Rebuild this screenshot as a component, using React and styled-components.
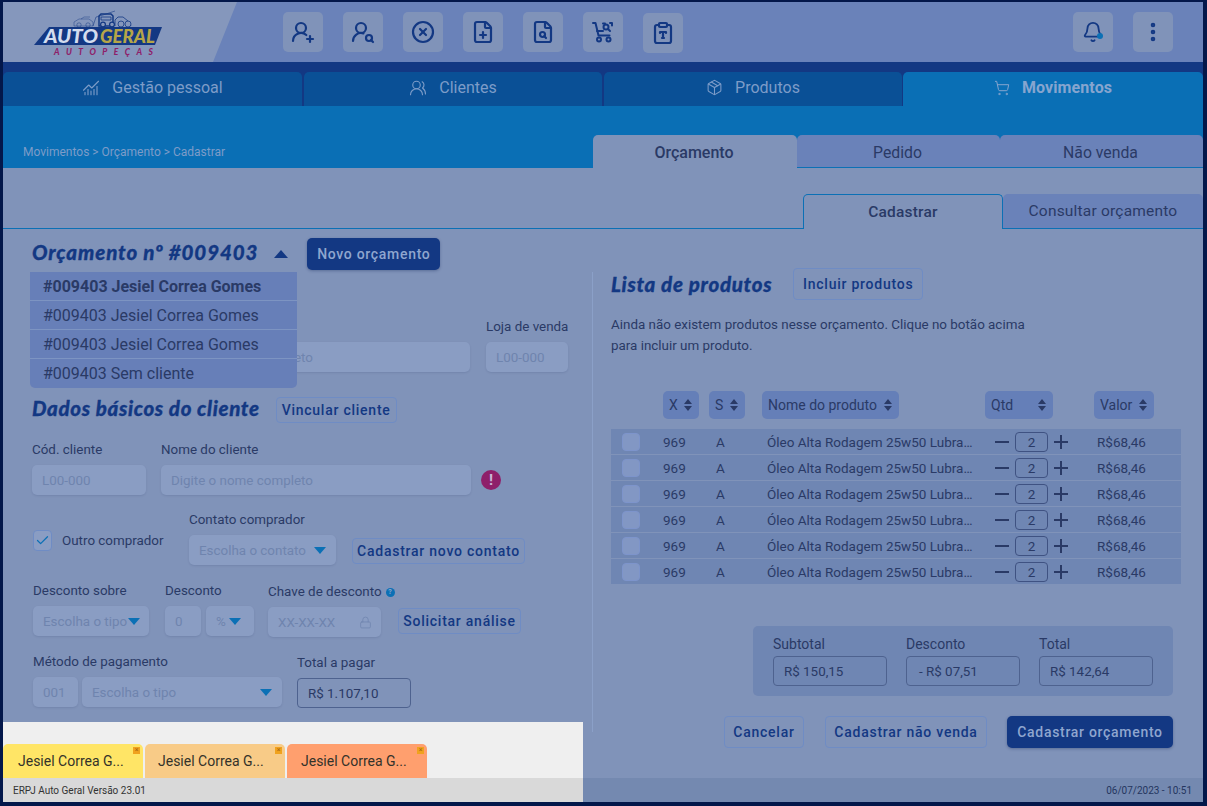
import React from 'react';
import styled, { createGlobalStyle } from 'styled-components';
import {
  UserRoundPlus,
  UserRoundSearch,
  CircleX,
  FilePlus,
  FileSearch,
  ClipboardType,
  Bell,
  EllipsisVertical,
  ChartNoAxesCombined,
  UsersRound,
  Package,
  ShoppingCart,
  Check,
  Lock,
} from 'lucide-react';

const GlobalStyle = createGlobalStyle`
  * { box-sizing: border-box; }
  html, body { margin: 0; padding: 0; height: 806px; overflow: hidden; }
  body { background: #03174a; font-family: Roboto, "Liberation Sans", sans-serif; }
`;

const navy = '#133883';
const ink = '#2a3a66';
const pageBg = '#8093b9';
const fieldBg = '#8a9dc3';
const hint = '#6f84ae';
const lineBlue = '#0b70b5';

const Frame = styled.div`
  position: relative;
  width: 1200px;
  height: 800px;
  margin: 2px 0 0 3px;
  background: ${pageBg};
  display: flex;
  flex-direction: column;
  overflow: hidden;
`;

const Header = styled.header`
  height: 60px;
  flex-shrink: 0;
  background: #6a82b9;
  display: flex;
  align-items: center;
  padding-right: 30px;
`;

const LogoArea = styled.div`
  width: 234px;
  height: 60px;
  background: #8597bc;
  clip-path: polygon(0 0, 100% 0, 210px 100%, 0 100%);
  padding-left: 28px;
  flex-shrink: 0;
`;

const IconGroup = styled.div`
  display: flex;
  gap: 20px;
  margin-left: 46px;
`;

const RightGroup = styled(IconGroup)`
  margin-left: auto;
`;

const IconButton = styled.button`
  width: 40px;
  height: 40px;
  border: 0;
  padding: 0;
  border-radius: 5px;
  background: #8093b9;
  color: ${navy};
  display: flex;
  align-items: center;
  justify-content: center;
  position: relative;
  top: ${(p) => (p.$drop ? '1px' : '0')};
`;

const BellDot = styled.span`
  position: absolute;
  width: 6px;
  height: 6px;
  border-radius: 50%;
  background: #0b70b5;
  right: 10px;
  top: 21px;
`;

const Stripe = styled.div`
  height: 10px;
  flex-shrink: 0;
  background: ${navy};
`;

const NavBar = styled.nav`
  height: 34px;
  flex-shrink: 0;
  display: flex;
  gap: 2px;
  background: ${navy};
`;

const NavTab = styled.div`
  width: ${(p) => p.$w}px;
  margin-left: ${(p) => (p.$active ? '-1px' : '0')};
  border-radius: 5px 5px 0 0;
  background: ${(p) => (p.$active ? '#0a6fb5' : '#0a5096')};
  color: ${(p) => (p.$active ? '#86a5cf' : '#7d9cc8')};
  font-size: 16px;
  font-weight: ${(p) => (p.$active ? 700 : 400)};
  letter-spacing: ${(p) => (p.$active ? 0.1 : 0)}px;
  display: flex;
  align-items: center;
  justify-content: center;
  gap: 12px;
  padding-bottom: 3px;
`;

const SubBand = styled.div`
  height: 62px;
  flex-shrink: 0;
  background: #0a6fb5;
  display: flex;
  justify-content: space-between;
  align-items: flex-end;
`;

const Breadcrumb = styled.div`
  color: #7d9cc8;
  font-size: 12px;
  margin: 0 0 9px 20px;
`;

const SubTabs = styled.div`
  display: flex;
  width: 610px;
  height: 33px;
`;

const SubTab = styled.div`
  flex: ${(p) => (p.$active ? '0 0 204px' : '1')};
  border-radius: 5px 5px 0 0;
  background: ${(p) => (p.$active ? pageBg : '#6a82b9')};
  border-bottom: ${(p) => (p.$active ? '0' : `1px solid ${lineBlue}`)};
  color: ${ink};
  font-size: ${(p) => (p.$active ? 16 : 15.8)}px;
  font-weight: ${(p) => (p.$active ? 500 : 400)};
  display: flex;
  align-items: center;
  justify-content: center;
  padding: 2px 2px 0 0;
`;

const Content = styled.main`
  flex: 1;
  display: flex;
  flex-direction: column;
  min-height: 0;
`;

const FormTabs = styled.div`
  margin-top: 26px;
  height: 35px;
  flex-shrink: 0;
  display: flex;
  justify-content: flex-end;
  border-bottom: 1px solid ${lineBlue};
`;

const FormTab = styled.div`
  width: 200px;
  height: ${(p) => (p.$active ? '35px' : '34px')};
  border-radius: 5px 5px 0 0;
  background: ${(p) => (p.$active ? pageBg : '#6a82b9')};
  border: ${(p) => (p.$active ? `1px solid ${lineBlue}` : '0')};
  border-bottom: 0;
  color: ${ink};
  font-size: 15.5px;
  font-weight: ${(p) => (p.$active ? 500 : 400)};
  letter-spacing: 0.2px;
  display: flex;
  align-items: center;
  justify-content: center;
`;

const Columns = styled.div`
  flex: 1;
  display: flex;
  min-height: 0;
`;

const LeftColumn = styled.section`
  position: relative;
  width: 589px;
  flex-shrink: 0;
  padding: 9px 0 0 29px;
`;

const RightColumn = styled.section`
  flex: 1;
  padding: 39px 0 0 18px;
`;

const Divider = styled.div`
  width: 1px;
  height: 460px;
  margin-top: 43px;
  background: #8ba0c8;
  flex-shrink: 0;
`;

const TitleRow = styled.div`
  display: flex;
  align-items: center;
  height: ${(p) => p.$h || 32}px;
  margin-top: ${(p) => p.$top || 0}px;
`;

const Title = styled.h2`
  margin: 0 0 ${(p) => p.$lift || 0}px;
  color: ${navy};
  font-family: Lato, Roboto, sans-serif;
  font-size: 20.5px;
  font-style: italic;
  font-weight: 900;
  letter-spacing: ${(p) => p.$spacing || 0.65}px;
  white-space: nowrap;
  -webkit-text-stroke: 0.3px ${navy};
`;

const Caret = styled.span`
  width: 0;
  height: 0;
  border-left: 7px solid transparent;
  border-right: 7px solid transparent;
  border-bottom: 8px solid ${navy};
  margin: 0 19px 0 16px;
`;

const PrimaryButton = styled.button`
  height: 32px;
  width: ${(p) => p.$w}px;
  margin-left: ${(p) => p.$left || 0}px;
  padding: 0;
  border: 0;
  border-radius: 5px;
  background: ${navy};
  color: #8fa6cf;
  font: 500 14px Roboto, sans-serif;
  letter-spacing: 0.7px;
  box-shadow: 0 1px 3px rgba(20, 40, 90, 0.35);
`;

const OutlineButton = styled.button`
  height: ${(p) => p.$h || 26}px;
  width: ${(p) => p.$w}px;
  margin-left: ${(p) => p.$left || 0}px;
  margin-bottom: ${(p) => p.$bottom || 0}px;
  padding: 0;
  border: 1px solid #6f8cc4;
  border-radius: 4px;
  background: transparent;
  color: ${navy};
  font: 500 14px Roboto, sans-serif;
  letter-spacing: 0.75px;
  flex-shrink: 0;
`;

const Dropdown = styled.ul`
  position: absolute;
  z-index: 2;
  left: 27px;
  top: 43px;
  width: 267px;
  margin: 0;
  padding: 0;
  list-style: none;
  background: #677fb8;
  border-radius: 0 0 5px 5px;
`;

const DropItem = styled.li`
  height: 29px;
  padding-left: 13px;
  display: flex;
  align-items: center;
  color: ${ink};
  font-size: 16px;
  font-weight: ${(p) => (p.$bold ? 700 : 400)};
  border-bottom: 1px solid #7d94c2;
  &:last-child { border-bottom: 0; }
`;

const FormRow = styled.div`
  display: flex;
  align-items: flex-end;
  margin-top: ${(p) => p.$top || 0}px;
  margin-left: ${(p) => p.$left || 0}px;
`;

const Field = styled.div`
  display: flex;
  flex-direction: column;
  flex-shrink: 0;
  width: ${(p) => p.$w}px;
  margin-left: ${(p) => p.$left || 0}px;
  margin-bottom: ${(p) => p.$bottom || 0}px;
`;

const Label = styled.label`
  height: 16px;
  padding-top: 2px;
  line-height: 16px;
  margin-bottom: 8px;
  color: ${ink};
  font-size: 13.4px;
  white-space: nowrap;
  display: flex;
  align-items: center;
  gap: 4px;
`;

const InputBox = styled.div`
  height: 30px;
  border-radius: 5px;
  background: ${fieldBg};
  color: ${hint};
  font-size: 13.4px;
  padding: 0 ${(p) => p.$right ?? 10}px 0 10px;
  display: flex;
  align-items: center;
  justify-content: space-between;
  white-space: nowrap;
  box-shadow: 0 1px 2px rgba(40, 60, 110, 0.15);
`;

const ReadOnlyBox = styled.div`
  width: 114px;
  height: 30px;
  flex-shrink: 0;
  border: 1px solid #4e628f;
  border-radius: 4px;
  color: ${ink};
  font-size: 13.4px;
  padding-left: ${(p) => p.$pad || 10}px;
  display: flex;
  align-items: center;
`;

const SelectArrow = styled.span`
  width: 0;
  height: 0;
  flex-shrink: 0;
  border-left: 6px solid transparent;
  border-right: 6px solid transparent;
  border-top: 7px solid #0b70b5;
`;

const AlertDot = styled.span`
  width: 20px;
  height: 20px;
  margin: 0 0 5px 10px;
  border-radius: 50%;
  background: #8e1f6a;
  color: #c9b6d6;
  font-size: 15px;
  font-weight: 700;
  display: flex;
  align-items: center;
  justify-content: center;
`;

const InfoDot = styled.span`
  width: 9px;
  height: 9px;
  flex-shrink: 0;
  border-radius: 50%;
  background: #0b70b5;
  color: #8fa6cf;
  font-size: 7px;
  font-weight: 700;
  line-height: 9px;
  text-align: center;
`;

const CheckLabel = styled.div`
  display: flex;
  align-items: center;
  gap: 10px;
  margin-bottom: 14px;
  width: 156px;
  color: ${ink};
  font-size: 13.4px;
  flex-shrink: 0;
  white-space: nowrap;
`;

const CheckBox = styled.span`
  width: 19px;
  height: 21px;
  border: 1px solid #6f8cc4;
  border-radius: 4px;
  background: ${fieldBg};
  color: #0b70b5;
  display: flex;
  align-items: center;
  justify-content: center;
  flex-shrink: 0;
`;

const Paragraph = styled.p`
  margin: 14px 0 0;
  width: 430px;
  color: ${ink};
  font-size: 13.4px;
  line-height: 21px;
`;

const tableColumns = '52px 46px 53px 223px 109px 87px';

const TableHead = styled.div`
  display: grid;
  grid-template-columns: ${tableColumns};
  margin-top: 35px;
  height: 28px;
  width: 570px;
`;

const HeadCell = styled.div`
  grid-column: ${(p) => p.$col};
  width: ${(p) => p.$w}px;
  height: 28px;
  border-radius: 5px;
  background: #657fb8;
  color: ${ink};
  font-size: 14px;
  padding: 0 6px;
  display: flex;
  align-items: center;
  justify-content: space-between;
`;

const TableBody = styled.div`
  margin-top: 10px;
  width: 570px;
`;

const TableRow = styled.div`
  display: grid;
  grid-template-columns: ${tableColumns};
  align-items: center;
  height: 26px;
  background: #6f86b3;
  border-bottom: 1px solid #8093b9;
  color: ${ink};
  font-size: 13.5px;
  &:last-child { border-bottom: 0; height: 25px; }
`;

const RowCheck = styled.span`
  width: 18px;
  height: 18px;
  margin-left: 11px;
  border-radius: 4px;
  background: #8297c4;
  border: 1px solid #7d94cb;
`;

const Cell = styled.span`
  padding-left: ${(p) => p.$pad || 0}px;
  white-space: nowrap;
`;

const NameCell = styled.span`
  margin-left: 5px;
  width: 206px;
  overflow: hidden;
  text-overflow: ellipsis;
  white-space: nowrap;
`;

const Stepper = styled.div`
  display: flex;
  align-items: center;
  padding-left: 9px;
  gap: 5px;
  color: ${ink};
`;

const QtyBox = styled.span`
  width: 33px;
  height: 20px;
  margin-right: 1px;
  border: 1px solid #3f5282;
  border-radius: 4px;
  text-align: center;
  line-height: 18px;
`;

const Summary = styled.div`
  display: flex;
  gap: 19px;
  width: 420px;
  height: 70px;
  margin: 42px 0 0 142px;
  padding: 10px 20px 0;
  border-radius: 5px;
  background: #6f86b3;
`;

const SummaryField = styled.div`
  display: flex;
  flex-direction: column;
  gap: 5px;
`;

const SummaryLabel = styled.span`
  height: 15px;
  line-height: 17px;
  color: ${ink};
  font-size: 14px;
`;

const Actions = styled.div`
  display: flex;
  gap: 21px;
  margin: 20px 0 0 113px;
`;

const StatusBar = styled.footer`
  height: 24px;
  flex-shrink: 0;
  background: #7489b0;
  color: #24365f;
  font-size: 10px;
  display: flex;
  align-items: center;
  justify-content: flex-end;
  padding-right: 11px;
`;

const Dock = styled.div`
  position: absolute;
  z-index: 3;
  left: 0;
  bottom: 0;
  width: 580px;
  height: 80px;
  background: #efefef;
  display: flex;
  flex-direction: column;
  justify-content: flex-end;
`;

const DockTabs = styled.div`
  display: flex;
  gap: 2px;
`;

const DockTab = styled.div`
  position: relative;
  width: 140px;
  height: 34px;
  border-radius: 5px 5px 0 0;
  background: ${(p) => p.$color};
  color: #33322a;
  font-size: 14px;
  padding-left: ${(p) => p.$pad}px;
  display: flex;
  align-items: center;
`;

const DockClose = styled.span`
  position: absolute;
  top: 3px;
  right: 3px;
  width: 7px;
  height: 7px;
  background: #f0a21e;
  color: #a8650e;
  font-size: 7px;
  line-height: 7px;
  text-align: center;
`;

const DockStatus = styled.div`
  height: 24px;
  padding-left: 10px;
  background: #d9d9d9;
  color: #333;
  font-size: 10px;
  display: flex;
  align-items: center;
`;

const Logo = () => (
  <svg width="140" height="50" viewBox="0 0 140 50" style={{ display: 'block', marginTop: 6 }}>
    <g fill="none" stroke={navy} strokeWidth="0.8">
      <path d="M43 18 v-4 l5-3 h10 l4 3 v4 z" opacity="0.55" />
      <path d="M50 11 l3-2 h6" opacity="0.55" />
      <path d="M62 18 L65 9 l4-1 L84 3" opacity="0.7" />
      <path d="M68 18 v-10 l2-2 h10 l2 2 v10 z" strokeWidth="1.5" />
      <path d="M70 9 h10 v3 h-10 z" />
      <path d="M84 18 v-6 l3-3 h5 l5 4 l3 5" />
      <circle cx="72" cy="16.5" r="2.4" fill="#8597bc" strokeWidth="1.2" />
      <circle cx="81" cy="16.5" r="2.4" fill="#8597bc" strokeWidth="1.2" />
      <circle cx="90" cy="16" r="3" fill="#8597bc" />
      <circle cx="97" cy="16" r="3" fill="#8597bc" />
      <circle cx="48" cy="17" r="2.2" opacity="0.6" />
      <circle cx="57" cy="17" r="2.2" opacity="0.6" />
    </g>
    <polygon points="3,37 18,19 131,19 124,37" fill={navy} />
    <text x="13" y="34.5" textLength="54" lengthAdjust="spacingAndGlyphs" fill="#d3dcee" fontFamily="Lato, sans-serif" fontStyle="italic" fontWeight="900" fontSize="18">AUTO</text>
    <text x="69" y="34.5" textLength="55" lengthAdjust="spacingAndGlyphs" fill="#b5a548" fontFamily="Lato, sans-serif" fontStyle="italic" fontWeight="900" fontSize="18">GERAL</text>
    <text x="23" y="46.5" textLength="99" fill="#8e1f6a" fontFamily="Lato, sans-serif" fontStyle="italic" fontWeight="900" fontSize="8.5">AUTOPEÇAS</text>
  </svg>
);

const CartSearch = () => (
  <svg width="24" height="24" viewBox="0 0 24 24" fill="none" stroke="currentColor" strokeWidth="2" strokeLinecap="round" strokeLinejoin="round">
    <path d="M2 3h2.5l3 12.5h11" />
    <path d="M6 11h6" />
    <circle cx="8" cy="19.5" r="2" />
    <circle cx="17.5" cy="19.5" r="2" />
    <circle cx="15" cy="7" r="2.5" />
    <path d="M17 9l2 2" />
    <path d="M12 3.5h2M19 3h2v2.5" />
  </svg>
);

const SortIcon = () => (
  <svg width="10" height="14" viewBox="0 0 10 14" fill={ink}>
    <path d="M5 1l4 5H1zM5 13L1 8h8z" />
  </svg>
);

const MinusIcon = () => (
  <svg width="16" height="16" viewBox="0 0 16 16" stroke="currentColor" strokeWidth="2">
    <path d="M1 8h14" />
  </svg>
);

const PlusIcon = () => (
  <svg width="14" height="14" viewBox="0 0 14 14" stroke="currentColor" strokeWidth="2">
    <path d="M0 7h14M7 0v14" />
  </svg>
);

const topIcons = [
  <UserRoundPlus key="a" size={24} strokeWidth={2.2} />,
  <UserRoundSearch key="b" size={24} strokeWidth={2.2} />,
  <CircleX key="c" size={24} strokeWidth={2.2} />,
  <FilePlus key="d" size={24} strokeWidth={2.2} />,
  <FileSearch key="e" size={24} strokeWidth={2.2} />,
  <CartSearch key="f" />,
];

const orders = ['#009403 Jesiel Correa Gomes', '#009403 Jesiel Correa Gomes', '#009403 Jesiel Correa Gomes', '#009403 Sem cliente'];
const dockTabs = [
  { color: '#ffe566', pad: 15 },
  { color: '#f8cb87', pad: 13 },
  { color: '#ff9f6e', pad: 14 },
];

const ProductRow = () => (
  <TableRow>
    <RowCheck />
    <Cell>969</Cell>
    <Cell $pad={7}>A</Cell>
    <NameCell>Óleo Alta Rodagem 25w50 Lubrax Essencial</NameCell>
    <Stepper>
      <MinusIcon />
      <QtyBox>2</QtyBox>
      <PlusIcon />
    </Stepper>
    <Cell $pad={3}>R$68,46</Cell>
  </TableRow>
);

export default function App() {
  return (
    <>
      <GlobalStyle />
      <Frame>
        <Header>
          <LogoArea>
            <Logo />
          </LogoArea>
          <IconGroup>
            {topIcons.map((icon) => (
              <IconButton key={icon.key}>{icon}</IconButton>
            ))}
            <IconButton $drop>
              <ClipboardType size={24} strokeWidth={2.2} />
            </IconButton>
          </IconGroup>
          <RightGroup>
            <IconButton>
              <Bell size={22} />
              <BellDot />
            </IconButton>
            <IconButton>
              <EllipsisVertical size={24} strokeWidth={2.6} />
            </IconButton>
          </RightGroup>
        </Header>
        <Stripe />
        <NavBar>
          <NavTab $w={299}>
            <ChartNoAxesCombined size={18} strokeWidth={1.5} />
            Gestão pessoal
          </NavTab>
          <NavTab $w={298}>
            <UsersRound size={18} strokeWidth={1.5} />
            Clientes
          </NavTab>
          <NavTab $w={298}>
            <Package size={17} strokeWidth={1.5} />
            Produtos
          </NavTab>
          <NavTab $w={300} $active>
            <ShoppingCart size={16} strokeWidth={1.5} />
            Movimentos
          </NavTab>
        </NavBar>
        <SubBand>
          <Breadcrumb>Movimentos &gt; Orçamento &gt; Cadastrar</Breadcrumb>
          <SubTabs>
            <SubTab $active>Orçamento</SubTab>
            <SubTab>Pedido</SubTab>
            <SubTab>Não venda</SubTab>
          </SubTabs>
        </SubBand>
        <Content>
          <FormTabs>
            <FormTab $active>Cadastrar</FormTab>
            <FormTab>Consultar orçamento</FormTab>
          </FormTabs>
          <Columns>
            <LeftColumn>
              <TitleRow>
                <Title $spacing={0.9} $lift={4}>Orçamento nº #009403</Title>
                <Caret />
                <PrimaryButton $w={133}>Novo orçamento</PrimaryButton>
              </TitleRow>
              <Dropdown>
                {orders.map((order, i) => (
                  <DropItem key={i} $bold={i === 0}>{order}</DropItem>
                ))}
              </Dropdown>

              <FormRow $top={48}>
                <Field $w={114}>
                  <Label>Cód. vendedor</Label>
                  <InputBox>L00-000</InputBox>
                </Field>
                <Field $w={309} $left={15}>
                  <Label>Nome do vendedor</Label>
                  <InputBox>Digite o nome completo</InputBox>
                </Field>
                <Field $w={82} $left={16}>
                  <Label>Loja de venda</Label>
                  <InputBox>L00-000</InputBox>
                </Field>
              </FormRow>

              <TitleRow $h={26} $top={25}>
                <Title $lift={4}>Dados básicos do cliente</Title>
                <OutlineButton $w={121} $left={16}>Vincular cliente</OutlineButton>
              </TitleRow>

              <FormRow $top={18}>
                <Field $w={114}>
                  <Label>Cód. cliente</Label>
                  <InputBox>L00-000</InputBox>
                </Field>
                <Field $w={310} $left={15}>
                  <Label>Nome do cliente</Label>
                  <InputBox>Digite o nome completo</InputBox>
                </Field>
                <AlertDot>!</AlertDot>
              </FormRow>

              <FormRow $top={16} $left={1}>
                <CheckLabel>
                  <CheckBox>
                    <Check size={15} />
                  </CheckBox>
                  Outro comprador
                </CheckLabel>
                <Field $w={147}>
                  <Label>Contato comprador</Label>
                  <InputBox>
                    Escolha o contato
                    <SelectArrow />
                  </InputBox>
                </Field>
                <OutlineButton $w={173} $left={16} $bottom={1}>Cadastrar novo contato</OutlineButton>
              </FormRow>

              <FormRow $top={17} $left={1}>
                <Field $w={116} $bottom={1}>
                  <Label>Desconto sobre</Label>
                  <InputBox $right={9}>
                    Escolha o tipo
                    <SelectArrow />
                  </InputBox>
                </Field>
                <Field $w={36} $left={16} $bottom={1}>
                  <Label>Desconto</Label>
                  <InputBox>0</InputBox>
                </Field>
                <Field $w={48} $left={5} $bottom={1}>
                  <Label />
                  <InputBox $right={13}>
                    %
                    <SelectArrow />
                  </InputBox>
                </Field>
                <Field $w={113} $left={14}>
                  <Label>
                    Chave de desconto
                    <InfoDot>?</InfoDot>
                  </Label>
                  <InputBox $right={9}>
                    XX-XX-XX
                    <Lock size={13} strokeWidth={1.4} />
                  </InputBox>
                </Field>
                <OutlineButton $w={123} $left={17} $bottom={3}>Solicitar análise</OutlineButton>
              </FormRow>

              <FormRow $top={16} $left={1}>
                <Field $w={45} $bottom={1}>
                  <Label>Método de pagamento</Label>
                  <InputBox>001</InputBox>
                </Field>
                <Field $w={200} $left={4} $bottom={1}>
                  <Label />
                  <InputBox>
                    Escolha o tipo
                    <SelectArrow />
                  </InputBox>
                </Field>
                <Field $w={114} $left={15}>
                  <Label>Total a pagar</Label>
                  <ReadOnlyBox>R$ 1.107,10</ReadOnlyBox>
                </Field>
              </FormRow>
            </LeftColumn>

            <Divider />

            <RightColumn>
              <TitleRow>
                <Title $spacing={0.7}>Lista de produtos</Title>
                <OutlineButton $w={130} $h={32} $left={21}>Incluir produtos</OutlineButton>
              </TitleRow>
              <Paragraph>
                Ainda não existem produtos nesse orçamento. Clique no botão acima para incluir um produto.
              </Paragraph>
              <TableHead>
                <HeadCell $col={2} $w={36}>X<SortIcon /></HeadCell>
                <HeadCell $col={3} $w={36}>S<SortIcon /></HeadCell>
                <HeadCell $col={4} $w={137}>Nome do produto<SortIcon /></HeadCell>
                <HeadCell $col={5} $w={68}>Qtd<SortIcon /></HeadCell>
                <HeadCell $col={6} $w={60}>Valor<SortIcon /></HeadCell>
              </TableHead>
              <TableBody>
                {[0, 1, 2, 3, 4, 5].map((n) => (
                  <ProductRow key={n} />
                ))}
              </TableBody>
              <Summary>
                <SummaryField>
                  <SummaryLabel>Subtotal</SummaryLabel>
                  <ReadOnlyBox>R$ 150,15</ReadOnlyBox>
                </SummaryField>
                <SummaryField>
                  <SummaryLabel>Desconto</SummaryLabel>
                  <ReadOnlyBox $pad={12}>- R$ 07,51</ReadOnlyBox>
                </SummaryField>
                <SummaryField>
                  <SummaryLabel>Total</SummaryLabel>
                  <ReadOnlyBox>R$ 142,64</ReadOnlyBox>
                </SummaryField>
              </Summary>
              <Actions>
                <OutlineButton $w={80} $h={32}>Cancelar</OutlineButton>
                <OutlineButton $w={162} $h={32}>Cadastrar não venda</OutlineButton>
                <PrimaryButton $w={166} $left={-1}>Cadastrar orçamento</PrimaryButton>
              </Actions>
            </RightColumn>
          </Columns>
        </Content>
        <StatusBar>06/07/2023 - 10:51</StatusBar>
        <Dock>
          <DockTabs>
            {dockTabs.map((tab) => (
              <DockTab key={tab.color} $color={tab.color} $pad={tab.pad}>
                Jesiel Correa G...
                <DockClose>×</DockClose>
              </DockTab>
            ))}
          </DockTabs>
          <DockStatus>ERPJ Auto Geral Versão 23.01</DockStatus>
        </Dock>
      </Frame>
    </>
  );
}
